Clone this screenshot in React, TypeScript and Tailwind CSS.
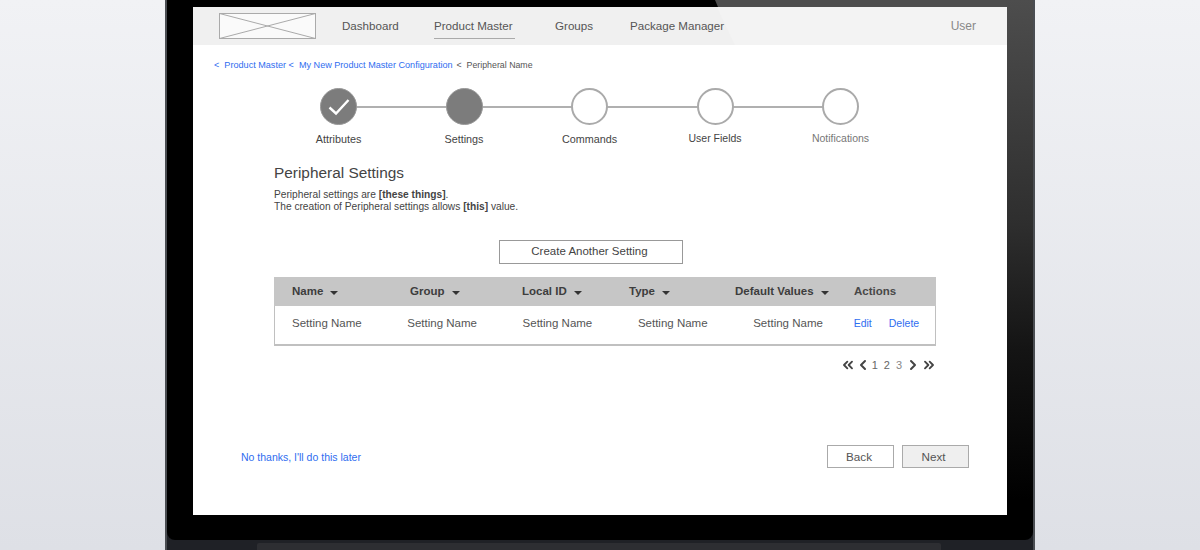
import { ChevronLeft, ChevronRight, ChevronsLeft, ChevronsRight } from "lucide-react";

const navItems = [
  { name: "Dashboard", width: "w-[92px]" },
  { name: "Product Master", width: "w-[121px]" },
  { name: "Groups", width: "w-[75px]" },
  { name: "Package Manager", width: "w-[94px]" },
];

const steps = [
  { label: "Attributes", state: "done" },
  { label: "Settings", state: "active" },
  { label: "Commands", state: "todo" },
  { label: "User Fields", state: "todo" },
  { label: "Notifications", state: "todo" },
];

const columns = [
  { name: "Name", width: "w-[118px]", cell: "w-[115.3px]" },
  { name: "Group", width: "w-[112px]", cell: "w-[115.3px]" },
  { name: "Local ID", width: "w-[107px]", cell: "w-[115.3px]" },
  { name: "Type", width: "w-[106px]", cell: "w-[115.3px]" },
  { name: "Default Values", width: "w-[119px]", cell: "w-[100.5px]" },
];

function Caret() {
  return <span className="ml-[7px] mt-[3px] inline-block border-x-[4.5px] border-t-[4.5px] border-x-transparent border-t-[#333]" />;
}

function LogoBox() {
  return (
    <svg width="97" height="26" viewBox="0 0 97 26" className="block">
      <rect x="0.5" y="0.5" width="96" height="25" fill="#fafafa" stroke="#aaa" />
      <path d="M0.5 0.5 L96.5 25.5 M96.5 0.5 L0.5 25.5" stroke="#aaa" fill="none" />
    </svg>
  );
}

function Step({ label, state }: { label: string; state: string }) {
  return (
    <div className="flex w-[37px] flex-col items-center">
      <div
        className={
          state === "todo"
            ? "z-10 flex h-[37px] w-[37px] items-center justify-center rounded-full border-2 border-[#aaa] bg-white"
            : "z-10 flex h-[37px] w-[37px] items-center justify-center rounded-full border border-[#999] bg-[#7c7c7c]"
        }
      >
        {state === "done" && (
          <svg width="22" height="18" viewBox="0 0 22 18">
            <path d="M1.5 9.5 L8 15.5 L20.5 2" stroke="#fff" strokeWidth="2.4" fill="none" />
          </svg>
        )}
      </div>
      <span
        className={
          label === "Notifications"
            ? "mt-[6px] whitespace-nowrap text-[10.5px] leading-[14px] text-[#777]"
            : label === "User Fields"
              ? "mt-[6px] whitespace-nowrap text-[10.5px] leading-[14px] text-[#444]"
              : "mt-[7px] whitespace-nowrap text-[10.8px] leading-[14px] text-[#444]"
        }
      >
        {label}
      </span>
    </div>
  );
}

export default function App() {
  return (
    <div className="relative flex h-[550px] w-[1200px] justify-center overflow-hidden bg-gradient-to-b from-[#f1f2f5] to-[#dee0e6] font-['Liberation_Sans',sans-serif]">
      {/* laptop lid */}
      <div className="relative h-[550px] w-[870px] shrink-0 overflow-hidden border-x-2 border-x-[#4a4d52] bg-[#1f2126] px-[26px] pt-[7px]">
        <div className="absolute inset-x-0 top-0 h-[540px] overflow-hidden rounded-b-[8px] bg-black">
          {/* reflection on the bezel, top right */}
          <div className="absolute right-0 top-0 h-[7px] w-[318px] bg-[#4d4d4d] [clip-path:polygon(0_0,100%_0,100%_100%,3px_100%)]" />
          <div className="absolute right-0 top-0 h-[500px] w-[27px] bg-[linear-gradient(to_bottom,#4d4d4d_0%,#2e2e2e_45%,#141414_70%,#000_100%)]" />
        </div>

        {/* base of the laptop */}
        <div className="absolute bottom-0 left-[90px] right-[92px] h-[7px] rounded-t-[2px] bg-[#2d2e32]" />

        <div className="relative flex h-[508px] w-[814px] flex-col bg-white">
          <header className="relative flex h-[38px] items-center bg-[#f0f0f0] pl-[26px] pr-[31px] text-[#555]">
            <div className="absolute inset-y-0 right-0 w-[290px] bg-[#f3f3f3] [clip-path:polygon(0_0,100%_0,100%_100%,18px_100%)]" />
            <div className="relative">
              <LogoBox />
            </div>
            <nav className="relative ml-[26px] flex text-[11.6px]">
              {navItems.map((item) => (
                <div key={item.name} className={item.width}>
                  <span className={item.name === "Product Master" ? "relative block w-[81px] whitespace-nowrap leading-[16px]" : "block whitespace-nowrap leading-[16px]"}>
                    {item.name}
                    {item.name === "Product Master" && <span className="absolute inset-x-0 -bottom-[5px] h-px bg-[#aaa]" />}
                  </span>
                </div>
              ))}
            </nav>
            <span className="relative ml-auto text-[12px] text-[#888]">User</span>
          </header>

          <div className="mt-[14px] flex pl-[21px] text-[9.1px] leading-[12px] text-[#2f6df0]">
            <span>&lt;&nbsp;&nbsp;Product Master &lt;&nbsp;&nbsp;My New Product Master Configuration</span>
            <span className="ml-[4px] text-[8.8px] text-[#555]">&lt;&nbsp;&nbsp;Peripheral Name</span>
          </div>

          {/* stepper */}
          <div className="relative ml-[127px] mt-[17px] flex w-[539px] justify-between">
            <div className="absolute inset-x-[19px] top-[18px] h-[1.5px] bg-[#b0b0b0]" />
            {steps.map((s) => (
              <Step key={s.label} label={s.label} state={s.state} />
            ))}
          </div>

          <section className="ml-[81px] mt-[17px] w-[662px]">
            <h1 className="text-[15.4px] leading-[20px] text-[#444]">Peripheral Settings</h1>
            <p className="mt-[6px] text-[10.2px] leading-[12px] text-[#444]">
              Peripheral settings are <b>[these things]</b>.
              <br />
              The creation of Peripheral settings allows <b>[this]</b> value.
            </p>

            <div className="mt-[27px] flex justify-center pr-[29px]">
              <button className="h-[24px] w-[184px] border border-[#999] pr-[2px] text-[11.5px] text-[#444]">
                Create Another Setting
              </button>
            </div>

            <div className="mt-[13px] border border-t-0 border-[#c0c0c0] border-b-2">
              <div className="-mx-px flex h-[29px] items-center bg-[#c6c6c6] pl-[18px] text-[11.5px] font-bold text-[#3d3d3d]">
                {columns.map((c) => (
                  <div key={c.name} className={`flex items-center ${c.width}`}>
                    {c.name}
                    <Caret />
                  </div>
                ))}
                <div className="text-[#484848]">Actions</div>
              </div>
              <div className="flex h-[38px] items-center pb-[2px] pl-[17px] text-[11.5px] text-[#555]">
                {columns.map((c) => (
                  <div key={c.name} className={c.cell}>
                    Setting Name
                  </div>
                ))}
                <div className="flex gap-[17px] text-[10.5px] text-[#2f6df0]">
                  <span>Edit</span>
                  <span>Delete</span>
                </div>
              </div>
            </div>

            <div className="-mr-[1px] mt-[11px] flex h-[16px] items-center justify-end text-[11px] text-[#666]">
              <ChevronsLeft size={16} strokeWidth={2.8} className="text-[#444]" />
              <ChevronLeft size={16} strokeWidth={3} className="-ml-[1px] text-[#444]" />
              <span className="ml-[1px] flex gap-[6px]">
                <span>1</span>
                <span>2</span>
                <span className="text-[#888]">3</span>
              </span>
              <ChevronRight size={16} strokeWidth={3} className="ml-[3px] text-[#444]" />
              <ChevronsRight size={16} strokeWidth={2.8} className="text-[#444]" />
            </div>
          </section>

          <footer className="mt-[72px] flex items-center pl-[48px] pr-[38px]">
            <span className="mt-[3px] text-[10.5px] text-[#2f6df0]">No thanks, I'll do this later</span>
            <div className="ml-auto flex gap-[8px] text-[11.7px] text-[#555]">
              <button className="h-[23px] w-[67px] border border-[#aaa] bg-white pr-[3px]">Back</button>
              <button className="h-[23px] w-[67px] border border-[#aaa] bg-[#efefef] pr-[4px]">Next</button>
            </div>
          </footer>
        </div>
      </div>
    </div>
  );
}
